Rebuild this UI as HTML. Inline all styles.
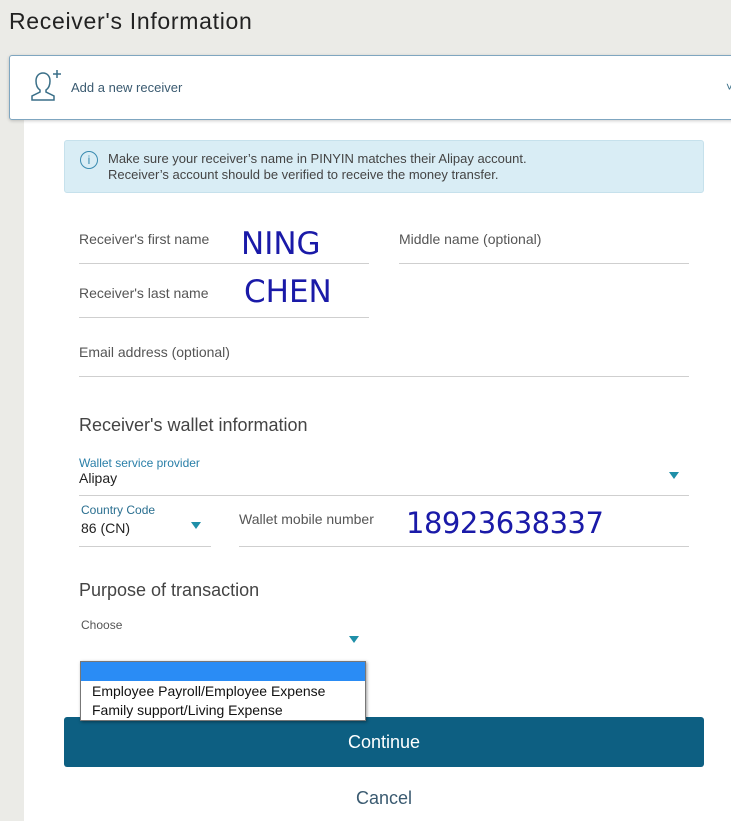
<!DOCTYPE html>
<html><head><style>
*{margin:0;padding:0;box-sizing:border-box}
body{width:731px;height:821px;overflow:hidden;background:#ebebe7;font-family:"Liberation Sans",sans-serif;position:relative;color:#444}
.a{position:absolute;white-space:nowrap}
.line{position:absolute;height:1px;background:#cfcfcf}
.lbl{font-size:14px;color:#555}
.hand{font-size:31px;color:#1a1aa8;font-family:"DejaVu Sans","Liberation Sans",sans-serif}
.tri{position:absolute;width:0;height:0;border-left:5px solid transparent;border-right:5px solid transparent;border-top:7px solid #1f8fa8}
</style></head><body>
<div class="a" style="left:9px;top:8px;font-size:23px;color:#222;letter-spacing:0.7px">Receiver's Information</div>
<div class="a" style="left:24px;top:118px;width:707px;height:703px;background:#fff"></div>
<div class="a" style="left:9px;top:55px;width:730px;height:65px;background:#fff;border:1px solid #7fa6c0;border-radius:3px;box-shadow:0 1px 3px rgba(0,0,0,.2)"></div>
<svg class="a" style="left:28px;top:68px" width="36" height="36" viewBox="0 0 36 36" fill="none" stroke="#3a6f88" stroke-width="1.5"><path d="M12 22c-3-2-4-6-4-9 0-5 3-8 7-8s7 3 7 8c0 3-1 7-4 9v2l8 4v4H4v-4l8-4z"/><path d="M29 2v8M25 6h8"/></svg>
<div class="a" style="left:71px;top:80px;font-size:13px;color:#3a5a70">Add a new receiver</div>
<div class="a" style="left:726px;top:80px;font-size:12px;color:#3a6f88">˅</div>
<div class="a" style="left:64px;top:140px;width:640px;height:53px;background:#d9edf5;border:1px solid #c6e1ec;border-radius:3px"></div>
<div class="a" style="left:80px;top:151px;width:18px;height:18px;border:1.3px solid #3a8bb0;border-radius:50%;color:#3a8bb0;font-size:12px;text-align:center;line-height:16px">i</div>
<div class="a" style="left:108px;top:151px;font-size:13px;color:#444;line-height:16px">Make sure your receiver’s name in PINYIN matches their Alipay account.<br>Receiver’s account should be verified to receive the money transfer.</div>
<div class="a lbl" style="left:79px;top:231px">Receiver's first name</div>
<div class="a hand" style="left:241px;top:226px">NING</div>
<div class="line" style="left:79px;top:263px;width:290px"></div>
<div class="a lbl" style="left:399px;top:231px">Middle name (optional)</div>
<div class="line" style="left:399px;top:263px;width:290px"></div>
<div class="a lbl" style="left:79px;top:285px">Receiver's last name</div>
<div class="a hand" style="left:244px;top:274px">CHEN</div>
<div class="line" style="left:79px;top:317px;width:290px"></div>
<div class="a lbl" style="left:79px;top:344px">Email address (optional)</div>
<div class="line" style="left:79px;top:376px;width:610px"></div>
<div class="a" style="left:79px;top:415px;font-size:18px;color:#444">Receiver's wallet information</div>
<div class="a" style="left:79px;top:456px;font-size:12px;color:#2a7fa8">Wallet service provider</div>
<div class="a" style="left:79px;top:470px;font-size:14px;color:#222">Alipay</div>
<div class="tri" style="left:669px;top:472px"></div>
<div class="line" style="left:79px;top:495px;width:610px"></div>
<div class="a" style="left:81px;top:503px;font-size:12px;color:#2a6f90">Country Code</div>
<div class="a" style="left:81px;top:520px;font-size:14px;color:#222">86 (CN)</div>
<div class="tri" style="left:191px;top:522px"></div>
<div class="line" style="left:79px;top:546px;width:132px"></div>
<div class="a lbl" style="left:239px;top:511px">Wallet mobile number</div>
<div class="a hand" style="left:406px;top:506px;font-size:29px;letter-spacing:-0.5px">18923638337</div>
<div class="line" style="left:239px;top:546px;width:450px"></div>
<div class="a" style="left:79px;top:580px;font-size:18px;color:#444">Purpose of transaction</div>
<div class="a" style="left:81px;top:618px;font-size:12px;color:#555">Choose</div>
<div class="tri" style="left:349px;top:636px"></div>
<div class="a" style="left:64px;top:717px;width:640px;height:50px;background:#0d5f82;border-radius:3px;color:#fff;font-size:18px;text-align:center;line-height:50px">Continue</div>
<div class="a" style="left:80px;top:661px;width:286px;height:60px;background:#fff;border:1px solid #777;box-shadow:1px 1px 3px rgba(0,0,0,.4)"></div>
<div class="a" style="left:81px;top:662px;width:284px;height:19px;background:#2a8cf5"></div>
<div class="a" style="left:92px;top:682px;font-size:14px;color:#111;line-height:19px">Employee Payroll/Employee Expense<br>Family support/Living Expense</div>
<div class="a" style="left:356px;top:788px;font-size:18px;color:#3a5a70">Cancel</div>
</body></html>
